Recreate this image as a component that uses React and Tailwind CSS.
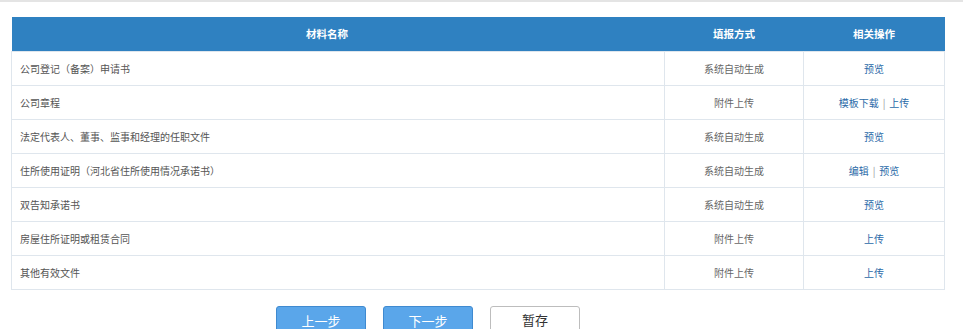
const rows = [
  { name: "公司登记（备案）申请书", mode: "系统自动生成", actions: ["预览"] },
  { name: "公司章程", mode: "附件上传", actions: ["模板下载", "上传"] },
  { name: "法定代表人、董事、监事和经理的任职文件", mode: "系统自动生成", actions: ["预览"] },
  { name: "住所使用证明（河北省住所使用情况承诺书）", mode: "系统自动生成", actions: ["编辑", "预览"] },
  { name: "双告知承诺书", mode: "系统自动生成", actions: ["预览"] },
  { name: "房屋住所证明或租赁合同", mode: "附件上传", actions: ["上传"] },
  { name: "其他有效文件", mode: "附件上传", actions: ["上传"] },
];

function Actions({ items }) {
  return (
    <span>
      {items.map((a, i) => (
        <span key={a}>
          {i > 0 && <span className="text-[#999] mx-[4px]">|</span>}
          <a className="text-[#2a6aa8] cursor-pointer">{a}</a>
        </span>
      ))}
    </span>
  );
}

export default function App() {
  return (
    <div
      className="w-[963px] h-[329px] bg-white overflow-hidden"
      style={{ fontFamily: '"Noto Sans CJK SC", "Noto Sans", sans-serif' }}
    >
      <div className="h-[2px] bg-[#e4e4e4]" />

      {/* materials table */}
      <div className="pl-[11px] pt-[15px]">
        <table className="w-[933px] border-collapse text-[10px] table-fixed">
          <colgroup>
            <col className="w-[653px]" />
            <col className="w-[139px]" />
            <col className="w-[141px]" />
          </colgroup>
          <thead>
            <tr className="h-[34px] bg-[#2f81c1] text-white text-[10.5px]">
              <th className="font-bold pr-[22px]">材料名称</th>
              <th className="font-bold">填报方式</th>
              <th className="font-bold">相关操作</th>
            </tr>
          </thead>
          <tbody>
            {rows.map((r) => (
              <tr key={r.name} className="h-[34px]">
                <td className="border border-[#dfe6ed] pl-[8px] text-[#555]">{r.name}</td>
                <td className="border border-[#dfe6ed] text-center text-[#666]">{r.mode}</td>
                <td className="border border-[#dfe6ed] text-center">
                  <Actions items={r.actions} />
                </td>
              </tr>
            ))}
          </tbody>
        </table>
      </div>

      {/* step buttons */}
      <div className="flex gap-[17px] pl-[276px] pt-[16px]">
        <button className="w-[90px] h-[28px] rounded-[3px] bg-[#5aa6ea] border border-[#3f8ad0] text-white text-[13px] pt-[2px]">
          上一步
        </button>
        <button className="w-[90px] h-[28px] rounded-[3px] bg-[#5aa6ea] border border-[#3f8ad0] text-white text-[13px] pt-[2px]">
          下一步
        </button>
        <button className="w-[90px] h-[28px] rounded-[3px] bg-white border border-[#bdbdbd] text-[#333] text-[13px]">
          暂存
        </button>
      </div>
    </div>
  );
}
